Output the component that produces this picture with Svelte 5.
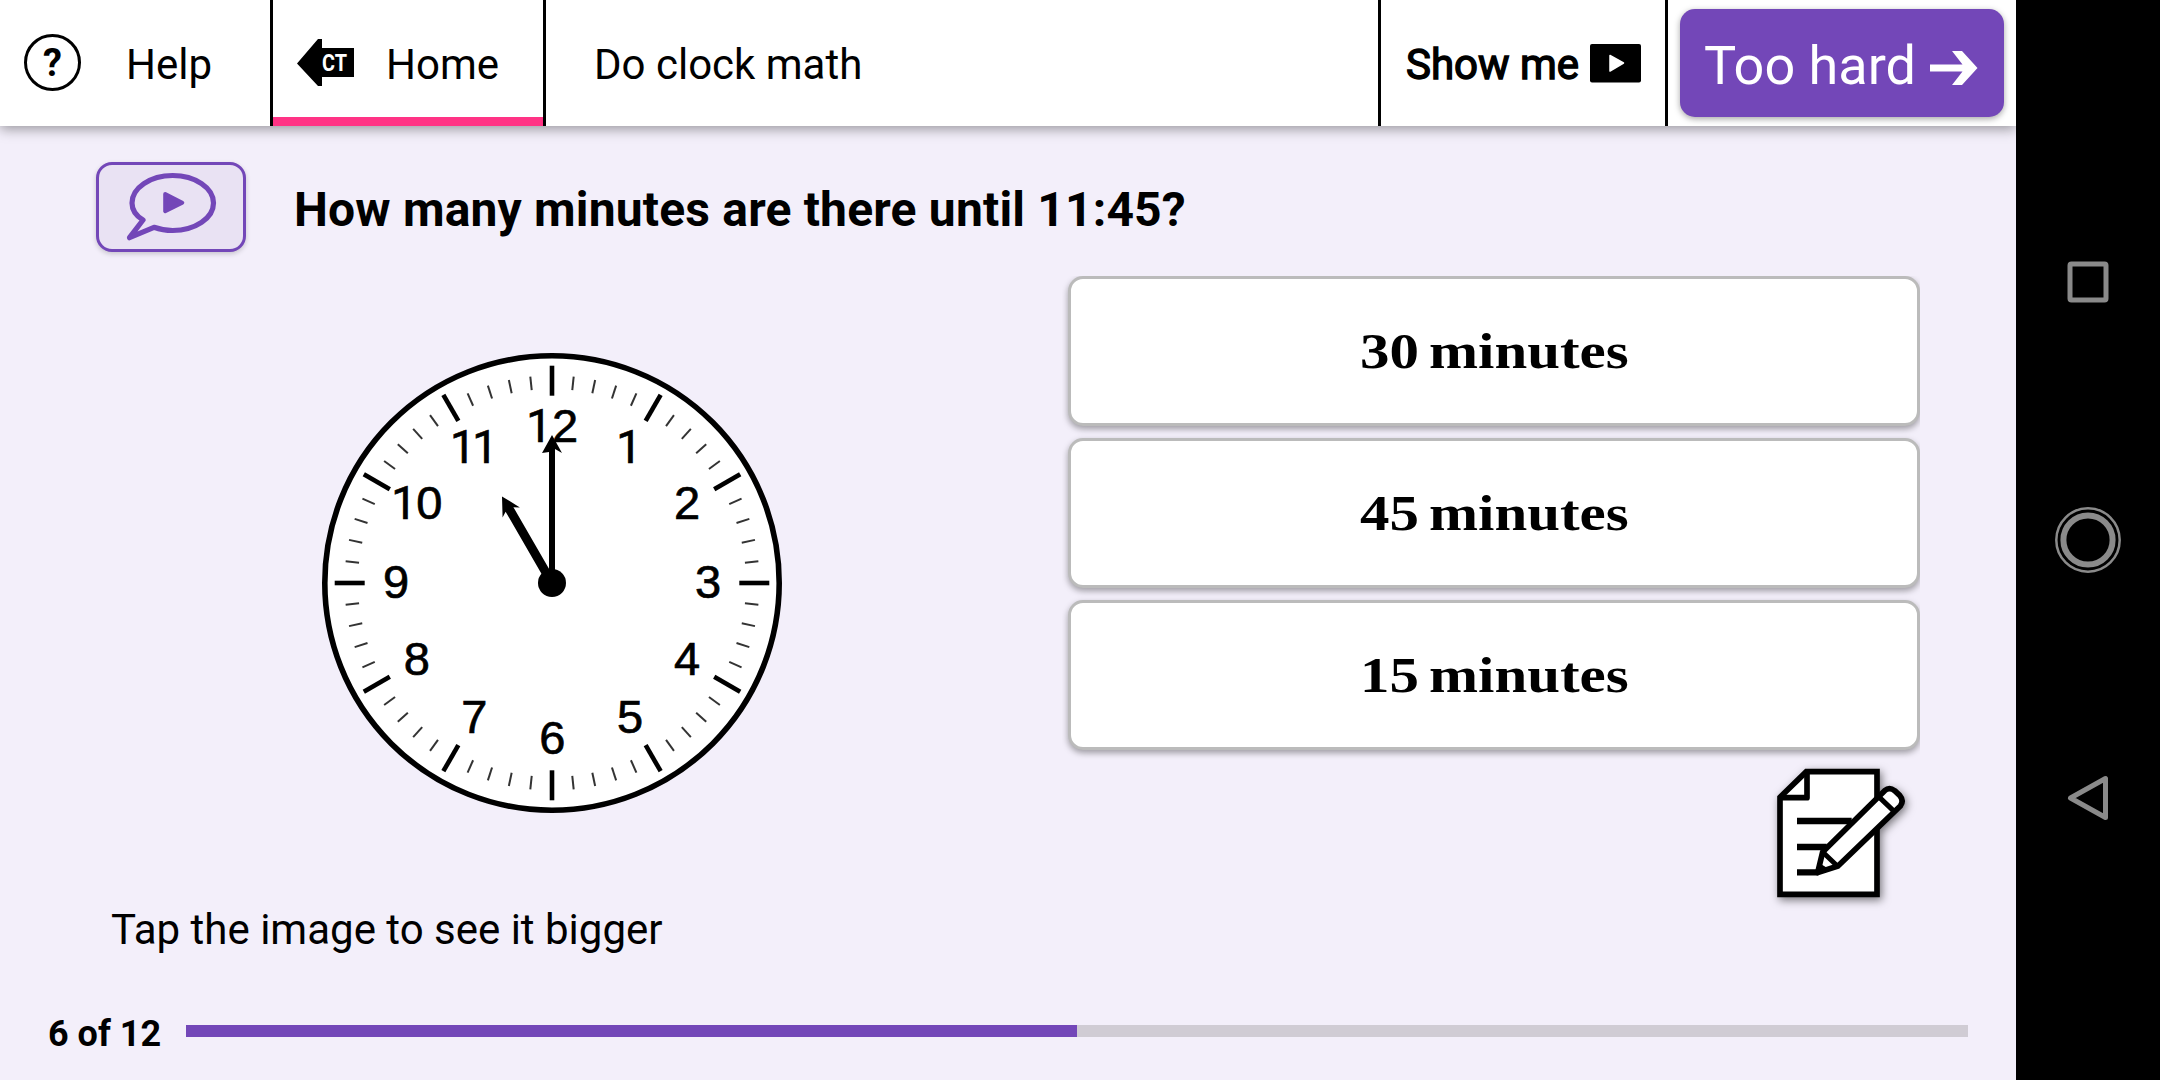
<script>
  const answers = ['30 minutes', '45 minutes', '15 minutes'];
  const current = 6;
  const total = 12;

  // Tick marks around the dial, one per minute.
  const ticks = Array.from({ length: 60 }, (_, i) => ({ angle: i * 6, major: i % 5 === 0 }));

  // Dial digits: [character, centre x, baseline y], relative to the dial centre.
  const digits = [
    ['1', -13, -141.3], ['2', 13, -141.3],
    ['1', 77, -120.3],
    ['2', 135, -63.7],
    ['3', 156, 14.7],
    ['4', 135, 92.3],
    ['5', 78, 149.7],
    ['6', 0.3, 170.7],
    ['7', -77.7, 150],
    ['8', -135.3, 92.3],
    ['9', -156, 14.7],
    ['1', -148, -63.7], ['0', -122.7, -63.7],
    ['1', -89.3, -120.3], ['1', -67, -120.3]
  ];
</script>

<div class="screen">
  <div class="app">
    <header>
      <button class="help">
        <svg class="help-icon" viewBox="0 0 58 58">
          <circle cx="28.5" cy="28.5" r="27" fill="none" stroke="#000" stroke-width="3" />
          <text x="28.5" y="42" text-anchor="middle">?</text>
        </svg>
        <span>Help</span>
      </button>
      <button class="home">
        <svg class="home-icon" viewBox="0 0 57 48">
          <path d="M0 24.5 L21 0 H25 V9 H57 V38 H25 V47 H21 Z" />
          <text x="25" y="31.5" textLength="25" lengthAdjust="spacingAndGlyphs">CT</text>
        </svg>
        <span>Home</span>
      </button>
      <h1>Do clock math</h1>
      <button class="show">
        <span>Show me</span>
        <svg class="video-icon" viewBox="0 0 51 39">
          <rect width="51" height="38.5" rx="2" />
          <path d="M20 11.5 L33.5 19 L20 27 Z" fill="#fff" stroke="#fff" stroke-width="1.5" stroke-linejoin="round" />
        </svg>
      </button>
      <div class="skip-cell">
        <button class="skip">
          <span>Too hard</span>
          <svg class="arrow" viewBox="0 0 48 36">
            <path d="M0 14.5 H32.5 L22 1 H32 L47.5 18 L32 35 H22 L32.5 21.5 H0 Z" fill="#fff" />
          </svg>
        </button>
      </div>
    </header>

    <main>
      <div class="question">
        <button class="speak">
          <svg viewBox="0 0 96 76">
            <path
              d="M20 51 C12.5 46.5 9 40.5 9 34 C9 18.8 27.2 6.5 49.7 6.5 C72.2 6.5 90.5 18.8 90.5 34 C90.5 49.2 72.2 61.5 49.7 61.5 C42.8 61.5 36.5 60.3 31 58.3 L6.5 68.7 Z"
              fill="none" stroke="#7347b8" stroke-width="5.2" stroke-linejoin="round" />
            <path d="M42.2 25 L59.3 33.7 L42.2 42.2 Z" fill="#7347b8" stroke="#7347b8" stroke-width="4" stroke-linejoin="round" />
          </svg>
        </button>
        <h2>How many minutes are there until 11:45?</h2>
      </div>

      <div class="work">
        <figure>
          <svg class="clock" viewBox="-230 -230 460 460">
            <circle r="227.2" fill="#fff" stroke="#000" stroke-width="5.6" />
            {#each ticks as tick}
              <line
                class:major={tick.major}
                x1="0" x2="0"
                y1={tick.major ? -217.3 : -207.5}
                y2={tick.major ? -187.3 : -194}
                transform="rotate({tick.angle})" />
            {/each}
            {#each digits as [char, x, y]}
              <text class:one={char === '1'} {x} {y}>{char}</text>
            {/each}
            <path d="M-3 0 V-131 L-10 -130 L0 -148 L10 -130 L3 -134 V0 Z" />
            <path transform="rotate(-30)" d="M-4.5 0 V-85 L-10 -81.5 L0 -100 L10 -81.5 L4.5 -85 V0 Z" />
            <circle r="14" />
          </svg>
          <figcaption>Tap the image to see it bigger</figcaption>
        </figure>

        <div class="side">
          <div class="answers">
            {#each answers as answer}
              <button class="answer"><span>{answer}</span></button>
            {/each}
          </div>
          <button class="notes">
            <svg viewBox="660 600 450 450">
              <path d="M690 712 L769 635 H981 V1003 H690 Z" fill="#fff" stroke="#000" stroke-width="17" />
              <path d="M690 713 H771 V637" fill="none" stroke="#000" stroke-width="17" stroke-linejoin="round" />
              <path d="M741 783 H905 M741 861 H830 M741 937 H805" stroke="#000" stroke-width="19" />
              <path
                d="M818 876 L1004 692 Q1018 680 1034 692 L1049 706 Q1063 722 1051 738 L864 918 L803 938 Z"
                fill="#fff" stroke="#000" stroke-width="17" stroke-linejoin="round" />
              <path d="M818 876 L862 918 M986 710 L1030 752" stroke="#000" stroke-width="15" />
              <path d="M806 938 L812 912 L836 926 Z" />
            </svg>
          </button>
        </div>
      </div>

      <footer>
        <span>{current} of {total}</span>
        <div class="track"><div class="fill" style="width: {(current / total) * 100}%"></div></div>
      </footer>
    </main>
  </div>

  <nav>
    <svg viewBox="0 0 70 70"><rect x="17" y="17" width="36" height="36" rx="1.5" /></svg>
    <svg viewBox="0 0 70 70">
      <circle cx="35" cy="35" r="31.7" stroke-width="2.5" />
      <circle cx="35" cy="35" r="24.6" stroke-width="6" />
    </svg>
    <svg viewBox="0 0 70 70"><path d="M17.5 35 L52.5 15.5 V54.5 Z" /></svg>
  </nav>
</div>

<style>
  :global(body) {
    margin: 0;
    background: #000;
  }
  .screen {
    display: flex;
    width: 2160px;
    height: 1080px;
    overflow: hidden;
    font-family: Roboto, sans-serif;
    color: #000;
  }
  button {
    margin: 0;
    padding: 0;
    border: 0;
    background: none;
    font: inherit;
    color: inherit;
    box-sizing: border-box;
  }
  svg {
    display: block;
    flex: none;
  }
  .app {
    display: flex;
    flex-direction: column;
    width: 2016px;
    background: #f3effa;
    overflow: hidden;
  }
  header {
    display: flex;
    height: 126px;
    background: #fff;
    font-size: 42px;
    box-shadow: 0 3px 12px rgba(0, 0, 0, 0.38);
  }
  header > * {
    box-sizing: border-box;
  }
  header span {
    padding-top: 3px;
    white-space: nowrap;
  }
  .help,
  .home,
  .show {
    display: flex;
    align-items: center;
  }
  .help {
    width: 270px;
    padding-left: 24px;
    gap: 44px;
  }
  .help-icon {
    width: 58px;
    height: 58px;
  }
  .help-icon text {
    font: 700 38px Roboto, sans-serif;
  }
  .home {
    width: 276px;
    padding-left: 24px;
    gap: 32px;
    border: solid #000;
    border-width: 0 3px;
    box-shadow: inset 0 -9px #ff3385;
  }
  .home-icon {
    width: 57px;
    height: 48px;
  }
  .home-icon text {
    font: 700 23px Roboto, sans-serif;
    fill: #fff;
  }
  h1 {
    flex: 1;
    margin: 0;
    padding: 3px 0 0 48px;
    font-size: 42px;
    font-weight: 400;
    line-height: 123px;
  }
  .show {
    width: 290px;
    padding-left: 25px;
    gap: 11px;
    border: solid #000;
    border-width: 0 3px;
    -webkit-text-stroke: 1.4px #000;
  }
  .video-icon {
    width: 51px;
    height: 39px;
  }
  .skip-cell {
    width: 348px;
    padding: 9px 12px;
  }
  .skip {
    display: flex;
    align-items: center;
    width: 324px;
    height: 108px;
    padding-left: 24px;
    gap: 14px;
    border-radius: 15px;
    background: #7347b8;
    color: #fff;
    font-size: 54px;
    box-shadow: 0 2px 6px rgba(0, 0, 0, 0.35);
  }
  .skip span {
    padding-top: 5px;
  }
  .arrow {
    width: 48px;
    height: 36px;
    padding-top: 9px;
  }
  main {
    display: flex;
    flex: 1;
    flex-direction: column;
    padding-top: 36px;
  }
  .question {
    display: flex;
    align-items: center;
    height: 90px;
    padding-left: 96px;
    gap: 48px;
  }
  .speak {
    display: flex;
    justify-content: center;
    align-items: center;
    width: 150px;
    height: 90px;
    border: 3px solid #7347b8;
    border-radius: 16px;
    background: #e9e2f3;
    box-shadow: 0 2px 5px rgba(0, 0, 0, 0.18);
  }
  .speak svg {
    width: 96px;
    height: 76px;
  }
  h2 {
    margin: 0;
    padding-top: 5px;
    font-size: 48px;
    line-height: 56px;
    font-weight: 700;
    letter-spacing: 0.18px;
    white-space: nowrap;
  }
  .work {
    display: flex;
    justify-content: space-between;
    height: 740px;
    padding: 24px 96px 0 96px;
    box-sizing: border-box;
  }
  figure {
    margin: 0;
    padding-top: 77px;
    width: 912px;
  }
  .clock {
    width: 460px;
    height: 460px;
    margin: 0 auto;
  }
  .clock line {
    stroke: #333;
    stroke-width: 2;
  }
  .clock line.major {
    stroke: #000;
    stroke-width: 4.6;
  }
  .clock text {
    font-family: "Liberation Sans", Arial, sans-serif;
    font-size: 47px;
    text-anchor: middle;
    stroke: #000;
    stroke-width: 0.7;
  }
  /* Roboto's numeral one is drawn without a foot. */
  .clock text.one {
    font-family: Roboto, sans-serif;
    font-size: 45.5px;
  }
  figcaption {
    padding: 92px 0 0 15px;
    font-size: 42px;
    line-height: 50px;
  }
  .side {
    width: 858px;
    display: flex;
    flex-direction: column;
    align-items: flex-end;
  }
  .answers {
    display: flex;
    flex-direction: column;
    gap: 12px;
    width: 852px;
    padding: 0 0 10px 6px;
    overflow: hidden;
  }
  .answer {
    height: 150px;
    border: 3px solid #bbb;
    border-radius: 15px;
    background: #fff;
    box-shadow: 0 3px 6px rgba(0, 0, 0, 0.35);
    font: 700 51px "Liberation Serif", serif;
  }
  .answer span {
    display: inline-block;
    word-spacing: -4px;
    transform: scaleX(1.155);
  }
  .notes {
    width: 150px;
    height: 150px;
  }
  .notes svg {
    width: 150px;
    height: 150px;
    filter: drop-shadow(2px 3px 4px rgba(0, 0, 0, 0.5));
  }
  footer {
    display: flex;
    align-items: center;
    height: 78px;
    padding: 0 48px;
  }
  footer span {
    width: 138px;
    padding-top: 5px;
    font-size: 36px;
    font-weight: 700;
  }
  .track {
    flex: 1;
    height: 12px;
    background: #d0ccd4;
  }
  .fill {
    height: 100%;
    background: #7347b8;
  }
  nav {
    display: flex;
    flex-direction: column;
    justify-content: center;
    align-items: center;
    gap: 188px;
    width: 144px;
    background: #000;
  }
  nav svg {
    width: 70px;
    height: 70px;
    fill: none;
    stroke: #8a8a8a;
    stroke-width: 5;
    stroke-linejoin: round;
  }
</style>
